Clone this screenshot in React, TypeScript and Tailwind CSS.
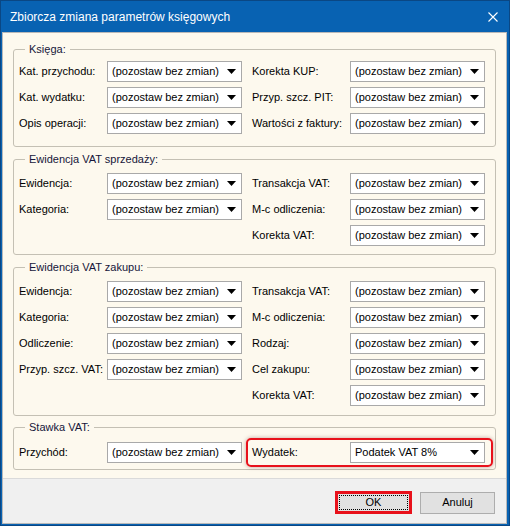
import React from 'react';

type Field = { label: string; value?: string; mark?: boolean } | null;

const font = { fontFamily: '"Liberation Sans", Arial, sans-serif' };

function Combo({ value = '(pozostaw bez zmian)' }: { value?: string }) {
  return (
    <div className="flex h-[21px] w-[135px] items-center justify-between border border-[#a9a9a9] bg-white pl-[4px] pr-[5px] text-[11px] text-black">
      <span className="whitespace-nowrap">{value}</span>
      <svg width="9" height="5" viewBox="0 0 9 5">
        <polygon points="0,0 9,0 4.5,5" fill="#000" />
      </svg>
    </div>
  );
}

function Cell({ field }: { field: Field }) {
  if (!field) {
    return (
      <>
        <div />
        <div />
      </>
    );
  }
  return (
    <>
      <div className="flex h-[21px] items-center whitespace-nowrap text-[11px] text-black">{field.label}</div>
      <div>
        <Combo value={field.value} />
      </div>
    </>
  );
}

function Group({
  title,
  rows,
  className,
}: {
  title: string;
  rows: [Field, Field][];
  className: string;
}) {
  return (
    <fieldset className={`rounded-[3px] border border-[#c4c0b4] pl-[5px] ${className}`}>
      <legend className="ml-[6px] px-[4px] text-[11px] leading-[14px] text-[#16163a]">{title}</legend>
      <div className="grid grid-cols-[88px_145px_98px_135px] gap-y-[5px]">
        {rows.map(([left, right], i) => (
          <React.Fragment key={i}>
            <Cell field={left} />
            {right && right.mark ? (
              <div className="relative col-span-2 grid grid-cols-[98px_135px]">
                <div className="absolute -top-[4px] -bottom-[4px] -left-[6px] -right-[8px] rounded-[5px] border-2 border-[#e8111b] shadow-[0_0_4px_rgba(90,0,0,0.35)]" />
                <Cell field={right} />
              </div>
            ) : (
              <Cell field={right} />
            )}
          </React.Fragment>
        ))}
      </div>
    </fieldset>
  );
}

export default function App() {
  return (
    <div
      className="flex h-[526px] w-[510px] flex-col border border-[#0a4784] bg-[#0862b2]"
      style={font}
    >
      {/* Title bar */}
      <div className="flex h-[31px] items-center justify-between pl-[9px] pr-[10px]">
        <span className="text-[12px] text-white">Zbiorcza zmiana parametrów księgowych</span>
        <svg width="10" height="10" viewBox="0 0 10 10" className="mr-[1px]">
          <path d="M0.5 0.5 L9.5 9.5 M9.5 0.5 L0.5 9.5" stroke="#fff" strokeWidth="1.1" />
        </svg>
      </div>

      {/* Client area */}
      <div className="mb-[1px] ml-[1px] mr-[2px] flex flex-1 flex-col border border-[#b8b8b8] bg-[#fdf9ee]">
        <div className="flex flex-1 flex-col px-[10px] pt-[9px]">
          <Group
            title="Księga:"
            className="pt-[5px] pb-[12px]"
            rows={[
              [{ label: 'Kat. przychodu:' }, { label: 'Korekta KUP:' }],
              [{ label: 'Kat. wydatku:' }, { label: 'Przyp. szcz. PIT:' }],
              [{ label: 'Opis operacji:' }, { label: 'Wartości z faktury:' }],
            ]}
          />
          <Group
            title="Ewidencja VAT sprzedaży:"
            className="mt-[5px] pt-[7px] pb-[8px]"
            rows={[
              [{ label: 'Ewidencja:' }, { label: 'Transakcja VAT:' }],
              [{ label: 'Kategoria:' }, { label: 'M-c odliczenia:' }],
              [null, { label: 'Korekta VAT:' }],
            ]}
          />
          <Group
            title="Ewidencja VAT zakupu:"
            className="mt-[5px] pt-[7px] pb-[9px]"
            rows={[
              [{ label: 'Ewidencja:' }, { label: 'Transakcja VAT:' }],
              [{ label: 'Kategoria:' }, { label: 'M-c odliczenia:' }],
              [{ label: 'Odliczenie:' }, { label: 'Rodzaj:' }],
              [{ label: 'Przyp. szcz. VAT:' }, { label: 'Cel zakupu:' }],
              [null, { label: 'Korekta VAT:' }],
            ]}
          />
          <Group
            title="Stawka VAT:"
            className="mt-[4px] pt-[8px] pb-[6px]"
            rows={[
              [{ label: 'Przychód:' }, { label: 'Wydatek:', value: 'Podatek VAT 8%', mark: true }],
            ]}
          />
        </div>

        {/* Buttons */}
        <div className="flex h-[45px] items-center justify-end gap-[8px] border-t border-[#dadada] bg-[#f0f0f0] pr-[11px] pt-[3px]">
          <div className="flex h-[23px] w-[77px] items-center justify-center border-[3px] border-[#e8111b] bg-[#e1e1e1] p-[1px]">
            <div className="flex h-full w-full items-center justify-center border border-dotted border-black text-[11px] text-black">
              OK
            </div>
          </div>
          <button className="flex h-[22px] w-[75px] items-center justify-center border border-[#adadad] bg-[#e1e1e1] text-[11px] text-black">
            Anuluj
          </button>
        </div>
      </div>
    </div>
  );
}
